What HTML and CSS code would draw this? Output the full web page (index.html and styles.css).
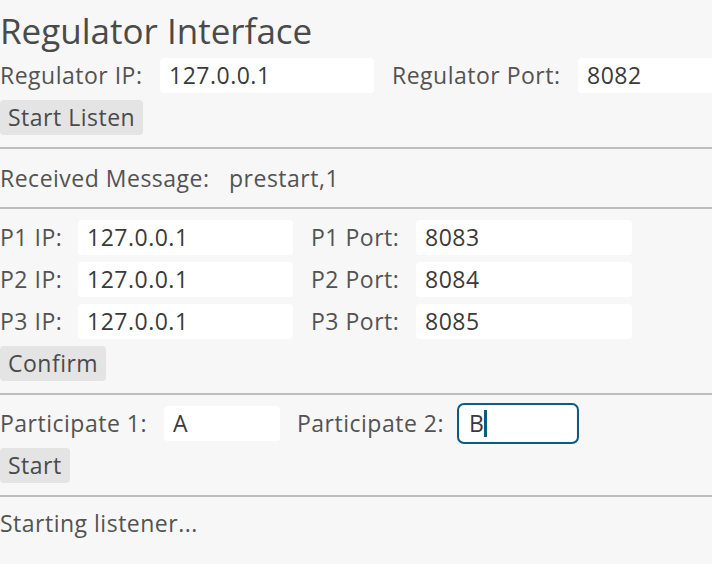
FILE: index.html
```html
<!DOCTYPE html>
<html>
<head>
<meta charset="utf-8">
<link rel="stylesheet" href="styles.css">
</head>
<body>
<div class="app">
  <h1 class="title">Regulator Interface</h1>
  <div class="row">
    <span class="label w-rip">Regulator IP:</span>
    <div class="field w-214">127.0.0.1</div>
    <span class="label w-rport">Regulator Port:</span>
    <div class="field w-160">8082</div>
  </div>
  <div class="btn-row"><button class="btn">Start Listen</button></div>
  <hr class="sep">
  <div class="msg-row">
    <span class="label w-msg">Received Message:</span>
    <span class="label">prestart,1</span>
  </div>
  <hr class="sep sep-flush">
  <div class="peers">
    <div class="row">
      <span class="label w-pip">P1 IP:</span>
      <div class="field w-215">127.0.0.1</div>
      <span class="label w-pport">P1 Port:</span>
      <div class="field w-216">8083</div>
    </div>
    <div class="row">
      <span class="label w-pip">P2 IP:</span>
      <div class="field w-215">127.0.0.1</div>
      <span class="label w-pport">P2 Port:</span>
      <div class="field w-216">8084</div>
    </div>
    <div class="row">
      <span class="label w-pip">P3 IP:</span>
      <div class="field w-215">127.0.0.1</div>
      <span class="label w-pport">P3 Port:</span>
      <div class="field w-216">8085</div>
    </div>
  </div>
  <div class="btn-row"><button class="btn">Confirm</button></div>
  <hr class="sep">
  <div class="row part-row">
    <span class="label w-part1">Participate 1:</span>
    <div class="field w-116">A</div>
    <span class="label w-part2">Participate 2:</span>
    <div class="field w-116 focused">B<span class="caret"></span></div>
  </div>
  <div class="btn-row"><button class="btn">Start</button></div>
  <hr class="sep">
  <div class="status">Starting listener...</div>
</div>
</body>
</html>
```
FILE: styles.css
```css
html, body {
  margin: 0;
  padding: 0;
  background: #f7f7f7;
  overflow: hidden;
}
body {
  font-family: "Open Sans", "Noto Sans", sans-serif;
  color: #535353;
  width: 712px;
  height: 564px;
}
.app {
  display: flex;
  flex-direction: column;
}
.title {
  margin: 0;
  height: 58px;
  font-size: 35px;
  font-weight: 400;
  line-height: 62px;
  color: #4a4a4a;
  letter-spacing: 0;
  white-space: nowrap;
}
.row {
  display: flex;
  align-items: center;
  height: 35px;
}
.label {
  font-size: 23px;
  letter-spacing: 0.5px;
  line-height: 35px;
  white-space: nowrap;
  flex: none;
}
.w-rip { width: 160px; }
.w-rport { width: 186px; margin-left: 18px; }
.w-msg { width: 229px; }
.w-pip { width: 78px; }
.w-pport { width: 105px; margin-left: 18px; }
.w-part1 { width: 164px; }
.w-part2 { width: 163px; margin-left: 17px; }
.field {
  flex: none;
  box-sizing: border-box;
  height: 35px;
  background: #fff;
  border-radius: 4px;
  padding: 0 9px;
  font-size: 23px;
  letter-spacing: 0.5px;
  line-height: 35px;
  color: #3a3a3a;
  white-space: nowrap;
  display: flex;
  align-items: center;
}
.w-214 { width: 214px; }
.w-215 { width: 215px; }
.w-216 { width: 216px; }
.w-160 { width: 160px; }
.w-116 { width: 116px; }
.focused {
  outline: 2px solid #0d5a82;
  outline-offset: 1px;
  border-radius: 4px;
}
.caret {
  display: inline-block;
  width: 3px;
  height: 27px;
  background: #0d5a82;
  margin-left: 0;
}
.btn-row {
  display: flex;
  margin-top: 7px;
}
.btn {
  font-family: inherit;
  font-size: 23px;
  letter-spacing: 0.5px;
  color: #4a4a4a;
  background: #e4e4e4;
  border: none;
  border-radius: 4px;
  height: 35px;
  padding: 0 8px;
  line-height: 35px;
}
.sep {
  margin: 12px 0 0 0;
  border: none;
  height: 2px;
  background: #bdbdbd;
}
.sep-flush {
  margin-top: 0;
}
.msg-row {
  display: flex;
  align-items: center;
  height: 58px;
}
.peers {
  display: flex;
  flex-direction: column;
  gap: 7px;
  margin-top: 11px;
}
.part-row {
  margin-top: 11px;
}
.status {
  font-size: 23px;
  letter-spacing: 0.5px;
  line-height: 52px;
}
```
